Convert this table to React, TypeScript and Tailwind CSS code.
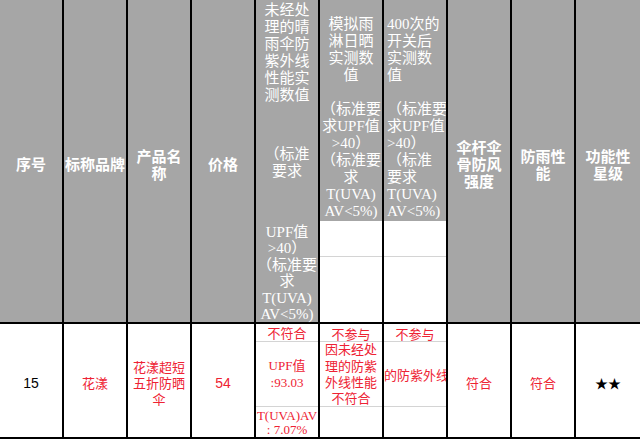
import React from "react";

const HEAD =
  "w-[64px] shrink-0 border-r-2 border-black bg-[#a6a6a6] flex flex-col items-center justify-center text-white font-bold text-[15px] leading-[17px] whitespace-nowrap pt-[5px]";

function HeadCell({ lines, last }: { lines: string[]; last?: boolean }) {
  return (
    <div className={last ? HEAD.replace("border-r-2 ", "") : HEAD}>
      {lines.map((l, i) => (
        <div key={i}>{l}</div>
      ))}
    </div>
  );
}

function DataCell({
  children,
  red,
  last,
}: {
  children: React.ReactNode;
  red?: boolean;
  last?: boolean;
}) {
  return (
    <div
      className={
        (last ? "" : "border-r-2 border-black ") +
        (red ? "text-[#ee2233] " : "text-black ") +
        "w-[64px] shrink-0 flex flex-col items-center justify-center text-[13px] leading-[16px] whitespace-nowrap pt-[4px]"
      }
    >
      {children}
    </div>
  );
}

export default function App() {
  return (
    <div className="w-[640px] h-[440px] bg-white overflow-hidden font-['Noto_Sans_CJK_SC',sans-serif]">
      {/* header row */}
      <div className="flex h-[324px] border-b-2 border-black">
        <HeadCell lines={["序号"]} />
        <HeadCell lines={["标称品牌"]} />
        <HeadCell lines={["产品名", "称"]} />
        <HeadCell lines={["价格"]} />

        {/* col 5 */}
        <div className="w-[64px] shrink-0 border-r-2 border-black bg-[#a6a6a6] flex flex-col items-center text-white text-[15px] leading-[17px] whitespace-nowrap pt-[2px] font-['Liberation_Serif','Noto_Sans_CJK_SC',serif]">
          <div>未经处</div>
          <div>理的晴</div>
          <div>雨伞防</div>
          <div>紫外线</div>
          <div>性能实</div>
          <div>测数值</div>
          <div className="mt-[42px]">（标准</div>
          <div>要求</div>
          <div className="mt-[44px] flex flex-col items-center leading-[16.4px]">
            <div>UPF值</div>
            <div>&gt;40）</div>
            <div>（标准要</div>
            <div>求</div>
            <div>T(UVA)</div>
            <div>AV&lt;5%)</div>
          </div>
        </div>

        {/* col 6 */}
        <div className="w-[64px] shrink-0 border-r-2 border-black flex flex-col">
          <div className="h-[221px] bg-[#a6a6a6] flex flex-col items-center text-white text-[15px] leading-[17px] whitespace-nowrap pt-[16px] font-['Liberation_Serif','Noto_Sans_CJK_SC',serif]">
            <div>模拟雨</div>
            <div>淋日晒</div>
            <div>实测数</div>
            <div>值</div>
            <div className="mt-[17px]">（标准要</div>
            <div>求UPF值</div>
            <div>&gt;40）</div>
            <div>（标准要</div>
            <div>求</div>
            <div>T(UVA)</div>
            <div>AV&lt;5%)</div>
          </div>
          <div className="h-[36px] border-b border-[#d4d4d4]" />
          <div className="flex-1" />
        </div>

        {/* col 7 */}
        <div className="w-[64px] shrink-0 border-r-2 border-black flex flex-col">
          <div className="h-[221px] bg-[#a6a6a6] flex flex-col items-start pl-[3px] text-white text-[15px] leading-[17px] whitespace-nowrap pt-[16px] font-['Liberation_Serif','Noto_Sans_CJK_SC',serif] overflow-hidden">
            <div>400次的</div>
            <div>开关后</div>
            <div>实测数</div>
            <div>值</div>
            <div className="mt-[17px]">（标准要</div>
            <div>求UPF值</div>
            <div>&gt;40）</div>
            <div>（标准</div>
            <div>要求</div>
            <div>T(UVA)</div>
            <div>AV&lt;5%)</div>
          </div>
          <div className="h-[36px] border-b border-[#d4d4d4]" />
          <div className="flex-1" />
        </div>

        <HeadCell lines={["伞杆伞", "骨防风", "强度"]} />
        <HeadCell lines={["防雨性", "能"]} />
        <HeadCell lines={["功能性", "星级"]} last />
      </div>

      {/* data row */}
      <div className="flex h-[115px] border-b-2 border-black">
        <DataCell>
          <span className="font-['Liberation_Sans',sans-serif] text-[14px]">15</span>
        </DataCell>
        <DataCell red>
          <div>花漾</div>
        </DataCell>
        <DataCell red>
          <div>花漾超短</div>
          <div>五折防晒</div>
          <div>伞</div>
        </DataCell>
        <DataCell red>
          <span className="font-['Liberation_Sans',sans-serif] text-[14px]">54</span>
        </DataCell>

        {/* col 5 data */}
        <div className="w-[64px] shrink-0 border-r-2 border-black flex flex-col text-[#ee2233] text-[13px] whitespace-nowrap font-['Liberation_Serif','Noto_Sans_CJK_SC',serif]">
          <div className="h-[18px] border-b border-[#d4d4d4] flex items-center justify-center leading-[16px] pt-[2px]">
            不符合
          </div>
          <div className="h-[65px] border-b border-[#d4d4d4] flex flex-col items-center justify-center leading-[17px]">
            <div>UPF值</div>
            <div>:93.03</div>
          </div>
          <div className="flex-1 flex flex-col items-center justify-end leading-[14px]">
            <div>T(UVA)AV</div>
            <div>: 7.07%</div>
          </div>
        </div>

        {/* col 6 data */}
        <div className="w-[64px] shrink-0 border-r-2 border-black flex flex-col text-[#ee2233] text-[13px] whitespace-nowrap">
          <div className="h-[18px] border-b border-[#d4d4d4] flex items-center justify-center leading-[16px] pt-[2px]">
            不参与
          </div>
          <div className="h-[65px] border-b border-[#d4d4d4] flex flex-col items-center justify-center leading-[16.3px]">
            <div>因未经处</div>
            <div>理的防紫</div>
            <div>外线性能</div>
            <div>不符合</div>
          </div>
          <div className="flex-1" />
        </div>

        {/* col 7 data */}
        <div className="w-[64px] shrink-0 border-r-2 border-black flex flex-col text-[#ee2233] text-[13px] whitespace-nowrap overflow-hidden">
          <div className="h-[18px] border-b border-[#d4d4d4] flex items-center justify-center leading-[16px] pt-[2px]">
            不参与
          </div>
          <div className="h-[65px] border-b border-[#d4d4d4] flex items-center justify-start leading-[16px] pt-[2px]">
            <div>的防紫外线</div>
          </div>
          <div className="flex-1" />
        </div>

        <DataCell red>
          <div>符合</div>
        </DataCell>
        <DataCell red>
          <div>符合</div>
        </DataCell>
        <DataCell last>
          <div className="text-[13px]">★★</div>
        </DataCell>
      </div>
    </div>
  );
}
